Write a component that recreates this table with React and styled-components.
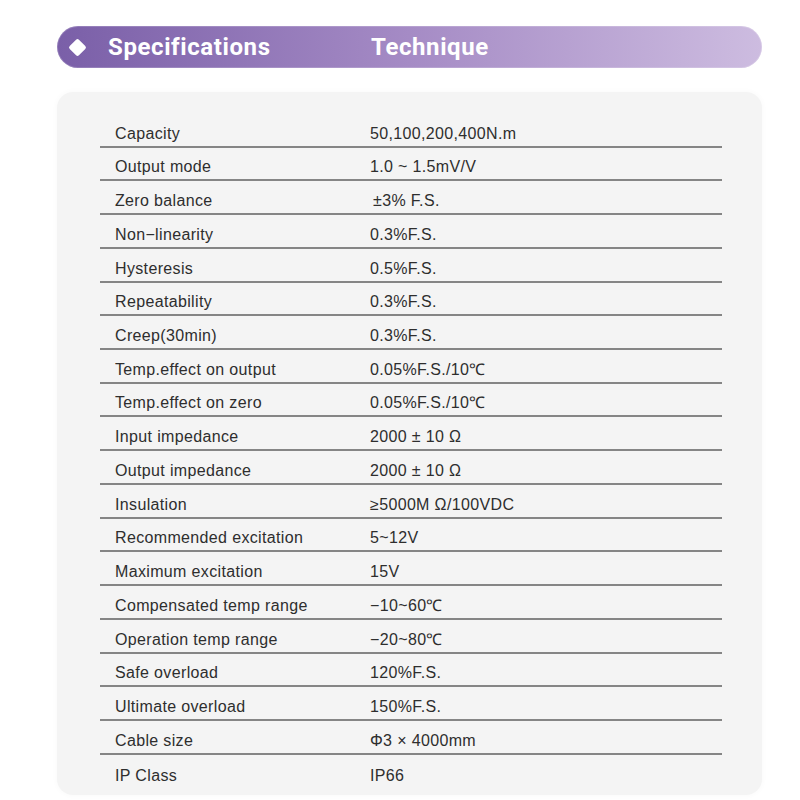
import React from 'react';
import styled, { createGlobalStyle } from 'styled-components';

const GlobalStyle = createGlobalStyle`
  html, body {
    margin: 0;
    padding: 0;
    background: #ffffff;
  }
  body {
    font-family: "Liberation Sans", Arial, sans-serif;
  }
`;

const Page = styled.div`
  width: 800px;
  height: 800px;
  box-sizing: border-box;
  padding: 26px 38px 0 57px;
  display: flex;
  flex-direction: column;
  gap: 24px;
`;

const TitleBar = styled.div`
  height: 42px;
  border-radius: 21px;
  background: linear-gradient(90deg, #7a5fa8 0%, #a58bc5 50%, #cdbce0 100%);
  box-shadow: inset 0 0 0 1px rgba(255, 255, 255, 0.18);
  display: flex;
  align-items: center;
  padding-left: 14px;
  color: #ffffff;
  font-family: Roboto, "Noto Sans", sans-serif;
  font-weight: 700;
  font-size: 24px;
`;

const Diamond = styled.span`
  width: 13px;
  height: 13px;
  background: #ffffff;
  border-radius: 2px;
  transform: rotate(45deg);
  margin-right: 24px;
  flex-shrink: 0;
`;

const Title = styled.span`
  width: ${p => p.$w || 'auto'};
  letter-spacing: 0.6px;
`;

const Card = styled.div`
  background: #f4f4f4;
  border-radius: 16px;
  padding: 22px 40px 7px 43px;
  box-shadow: 0 0 6px rgba(0, 0, 0, 0.03);
`;

const Row = styled.div`
  height: 33.72px;
  box-sizing: border-box;
  border-bottom: ${p => (p.$last ? 'none' : '2px solid #858585')};
  display: flex;
  align-items: flex-end;
  padding: 0 0 3px 15px;
  font-size: 16px;
  line-height: 18px;
  letter-spacing: 0.35px;
  color: #2e2e2e;
`;

const Label = styled.span`
  width: 255px;
  flex-shrink: 0;
  white-space: nowrap;
`;

const Value = styled.span`
  white-space: nowrap;
  padding-left: ${p => p.$indent || 0}px;
`;

const specs = [
  ['Capacity', '50,100,200,400N.m'],
  ['Output mode', '1.0 ~ 1.5mV/V'],
  ['Zero balance', '±3% F.S.', 3],
  ['Non\u2212linearity', '0.3%F.S.'],
  ['Hysteresis', '0.5%F.S.'],
  ['Repeatability', '0.3%F.S.'],
  ['Creep(30min)', '0.3%F.S.'],
  ['Temp.effect on output', '0.05%F.S./10\u2103'],
  ['Temp.effect on zero', '0.05%F.S./10\u2103'],
  ['Input impedance', '2000 ± 10 Ω'],
  ['Output impedance', '2000 ± 10 Ω'],
  ['Insulation', '≥5000M Ω/100VDC'],
  ['Recommended excitation', '5~12V'],
  ['Maximum excitation', '15V'],
  ['Compensated temp range', '\u221210~60\u2103'],
  ['Operation temp range', '\u221220~80\u2103'],
  ['Safe overload', '120%F.S.'],
  ['Ultimate overload', '150%F.S.'],
  ['Cable size', 'Φ3 × 4000mm'],
  ['IP Class', 'IP66'],
];

export default function App() {
  return (
    <>
      <GlobalStyle />
      <Page>
        <TitleBar>
          <Diamond />
          <Title $w="263px">Specifications</Title>
          <Title>Technique</Title>
        </TitleBar>
        <Card>
          {specs.map(([label, value, indent], i) => (
            <Row key={label} $last={i === specs.length - 1}>
              <Label>{label}</Label>
              <Value $indent={indent}>{value}</Value>
            </Row>
          ))}
        </Card>
      </Page>
    </>
  );
}
